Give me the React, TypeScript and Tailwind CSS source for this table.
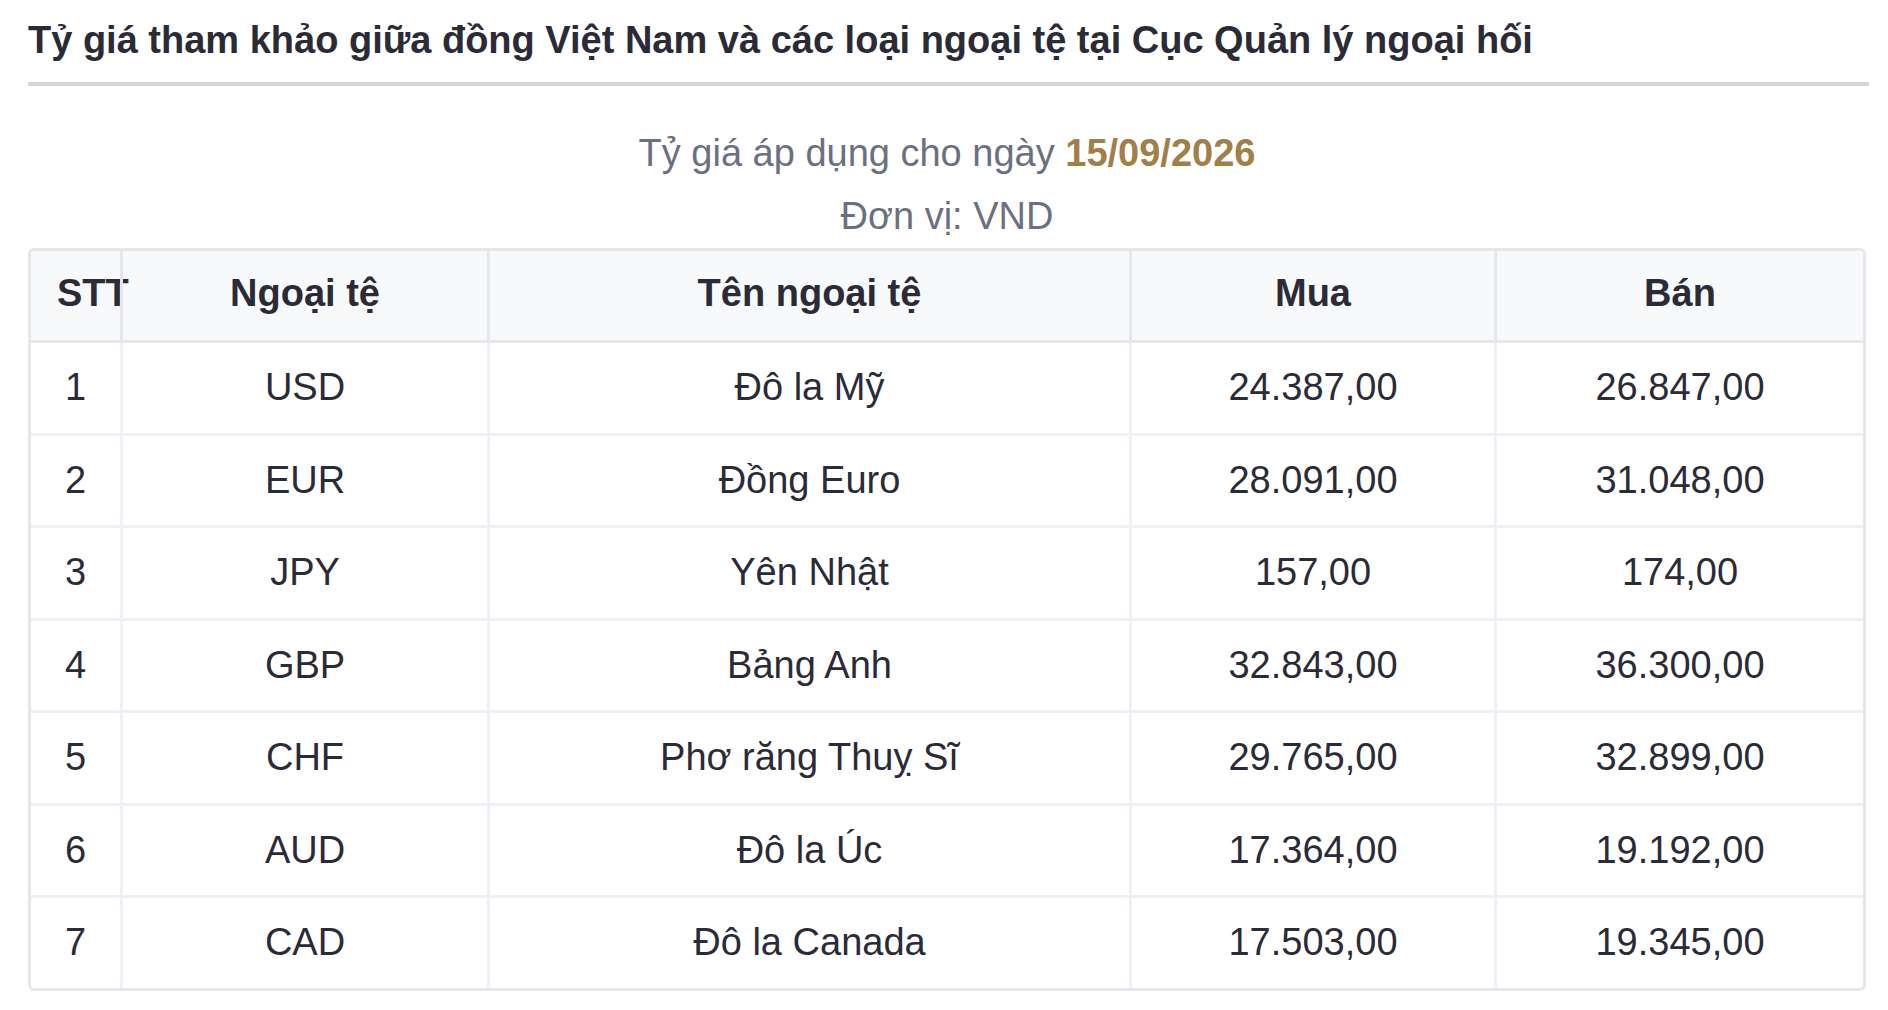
const RATES = [
  { stt: 1, code: "USD", name: "Đô la Mỹ", buy: "24.387,00", sell: "26.847,00" },
  { stt: 2, code: "EUR", name: "Đồng Euro", buy: "28.091,00", sell: "31.048,00" },
  { stt: 3, code: "JPY", name: "Yên Nhật", buy: "157,00", sell: "174,00" },
  { stt: 4, code: "GBP", name: "Bảng Anh", buy: "32.843,00", sell: "36.300,00" },
  { stt: 5, code: "CHF", name: "Phơ răng Thuỵ Sĩ", buy: "29.765,00", sell: "32.899,00" },
  { stt: 6, code: "AUD", name: "Đô la Úc", buy: "17.364,00", sell: "19.192,00" },
  { stt: 7, code: "CAD", name: "Đô la Canada", buy: "17.503,00", sell: "19.345,00" },
];

const cols = "grid grid-cols-[89px_367px_642px_365px_369px]";
const cell = "flex items-center justify-center whitespace-nowrap px-[26px]";
const head = `${cell} pb-[4px]`;

export default function App() {
  return (
    <div
      className="min-h-screen bg-white pl-[28px] pr-[19px] text-[#2b2b38]"
      style={{ fontFamily: '"Liberation Sans", Arial, sans-serif' }}
    >
      <h2 className="border-b-4 border-[#d6d6d6] pt-[15px] pb-[16px] text-[38px] font-bold leading-[51px]">
        Tỷ giá tham khảo giữa đồng Việt Nam và các loại ngoại tệ tại Cục Quản lý ngoại hối
      </h2>

      <div className="mt-[36px] w-[1838px] text-center text-[38px] leading-[63px] text-[#6b7080]">
        <div>
          Tỷ giá áp dụng cho ngày <span className="font-bold text-[#a07f48]">15/09/2026</span>
        </div>
        <div>Đơn vị: VND</div>
      </div>

      <div className="w-[1838px] overflow-hidden rounded-[6px] border-[3px] border-[#e5e7eb] text-[38px]">
        <div className={`${cols} h-[92px] border-b-[3px] border-[#e5e7eb] bg-[#f8f9fb] font-bold`}>
          <div className={`${head} justify-start`}>STT</div>
          <div className={`${head} border-l-[3px] border-[#e5e7eb]`}>Ngoại tệ</div>
          <div className={`${head} border-l-[3px] border-[#e5e7eb]`}>Tên ngoại tệ</div>
          <div className={`${head} border-l-[3px] border-[#e5e7eb]`}>Mua</div>
          <div className={`${head} border-l-[3px] border-[#e5e7eb]`}>Bán</div>
        </div>
        {RATES.map((r, i) => (
          <div
            key={r.code}
            className={`${cols} ${i < RATES.length - 1 ? "h-[92.5px] border-b-[3px] border-[#eef0f4]" : "h-[89.5px]"}`}
          >
            <div className={cell}>{r.stt}</div>
            <div className={`${cell} border-l-[3px] border-[#eef2f8]`}>{r.code}</div>
            <div className={`${cell} border-l-[3px] border-[#eef2f8]`}>{r.name}</div>
            <div className={`${cell} border-l-[3px] border-[#eef2f8]`}>{r.buy}</div>
            <div className={`${cell} border-l-[3px] border-[#eef2f8]`}>{r.sell}</div>
          </div>
        ))}
      </div>
    </div>
  );
}
